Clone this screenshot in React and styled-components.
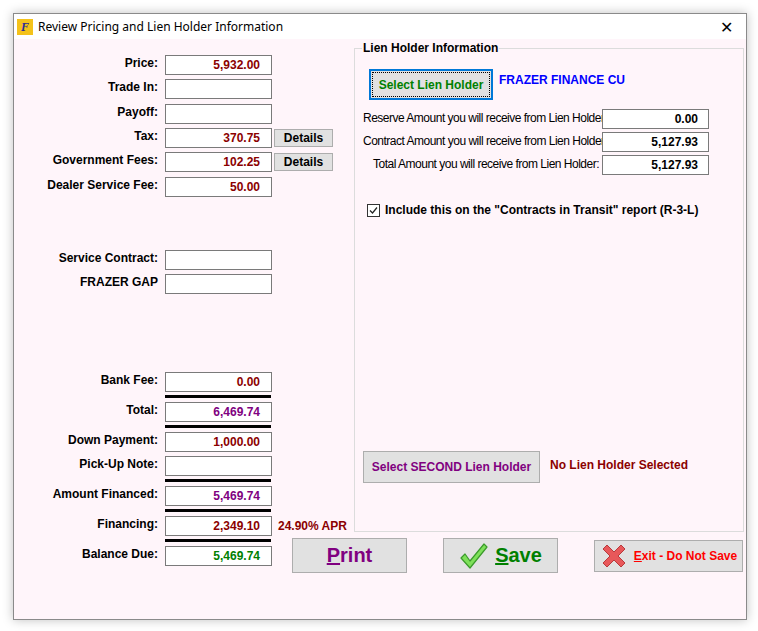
import React from 'react';
import styled, { createGlobalStyle } from 'styled-components';

const Global = createGlobalStyle`
  body { margin: 0; background: #ffffff; font-family: "Liberation Sans", Arial, sans-serif; }
`;

const Page = styled.div`
  width: 758px;
  height: 631px;
  padding: 13px;
  box-sizing: border-box;
`;

const Window = styled.div`
  width: 734px;
  height: 607px;
  border: 1px solid #8a8a8a;
  box-sizing: border-box;
  background: #fff5fa;
  box-shadow: 0 0 10px rgba(0, 0, 0, 0.25);
  display: flex;
  flex-direction: column;
`;

const TitleBar = styled.div`
  height: 25px;
  background: #fff;
  display: flex;
  align-items: center;
  padding-left: 3px;
  font-family: "Noto Sans", sans-serif;
  font-size: 12px;
  color: #000;
`;

const Logo = styled.div`
  width: 16px;
  height: 16px;
  background: #f4c21a;
  color: #2a2a9a;
  font-family: "Liberation Serif", serif;
  font-style: italic;
  font-weight: bold;
  font-size: 12px;
  line-height: 16px;
  text-align: center;
  margin-right: 5px;
`;

const Title = styled.span`
  flex: 1;
`;

const Close = styled.span`
  width: 40px;
  text-align: center;
  font-size: 16px;
`;

const Body = styled.div`
  flex: 1;
  display: flex;
`;

const Left = styled.div`
  width: 278px;
  padding-top: 16px;
  display: flex;
  flex-direction: column;
`;

const Row = styled.div`
  display: grid;
  grid-template-columns: 144px 107px auto;
  column-gap: 7px;
  align-items: center;
  margin-top: ${p => p.$mt || 0}px;
  height: 20px;
`;

const Label = styled.div`
  text-align: right;
  font-weight: bold;
  font-size: 12px;
  color: #000;
  white-space: nowrap;
  margin-top: -4px;
`;

const Field = styled.div`
  height: 20px;
  box-sizing: border-box;
  border: 1px solid #7a7a7a;
  background: #fff;
  text-align: right;
  padding-right: 11px;
  font-weight: bold;
  font-size: 12px;
  line-height: 18px;
  color: ${p => p.$color || '#8b0000'};
`;

const Details = styled.button`
  width: 59px;
  height: 18px;
  border: 1px solid #adadad;
  background: #e1e1e1;
  font-family: inherit;
  font-weight: bold;
  font-size: 12px;
  padding: 0;
  margin-left: -5px;
`;

const Apr = styled.span`
  color: #8b0000;
  font-weight: bold;
  font-size: 12px;
  white-space: nowrap;
  margin-left: -1px;
`;

const Rule = styled.div`
  width: 106px;
  height: 3px;
  background: #000;
  margin: 3px 0 4px 151px;
`;

const Right = styled.div`
  flex: 1;
  display: flex;
  flex-direction: column;
  padding-top: 2px;
`;

const Group = styled.fieldset`
  margin: 0 2px 0 62px;
  height: 491px;
  box-sizing: border-box;
  border: 1px solid #dcdcdc;
  padding: 14px 8px 0 8px;
  display: flex;
  flex-direction: column;
`;

const Legend = styled.legend`
  font-weight: bold;
  font-size: 12px;
  padding: 0 1px;
  margin-left: -1px;
`;

const LienLine = styled.div`
  display: flex;
  align-items: flex-start;
  gap: 6px;
`;

const SelectBtn = styled.button`
  width: 124px;
  height: 31px;
  background: #e1e1e1;
  border: 2px solid #0078d7;
  outline: 1px dotted #000;
  outline-offset: -4px;
  color: #008000;
  font-family: inherit;
  font-weight: bold;
  font-size: 12px;
  padding: 0;
  margin-left: 6px;
`;

const Blue = styled.span`
  color: #0000ff;
  font-weight: bold;
  font-size: 12px;
  margin-top: 4px;
`;

const AmountRows = styled.div`
  display: flex;
  flex-direction: column;
  gap: 3px;
  margin-top: 9px;
`;

const AmountRow = styled.div`
  display: grid;
  grid-template-columns: 236px 107px;
  column-gap: 3px;
  align-items: center;
`;

const NarrowLabel = styled.div`
  text-align: right;
  font-size: 12px;
  letter-spacing: -0.5px;
  color: #000;
  white-space: nowrap;
  margin-top: -3px;
`;

const AmountBox = styled(Field)`
  color: #000;
  padding-right: 10px;
`;

const Check = styled.label`
  display: flex;
  align-items: center;
  gap: 5px;
  margin: 28px 0 0 4px;
  font-weight: bold;
  font-size: 12px;
`;

const Box = styled.span`
  width: 11px;
  height: 11px;
  border: 1px solid #333;
  background: #fff;
  display: flex;
  align-items: center;
  justify-content: center;
`;

const Second = styled.div`
  display: flex;
  align-items: flex-start;
  gap: 10px;
  margin-top: 234px;
`;

const GrayBtn = styled.button`
  width: 177px;
  height: 32px;
  background: #e1e1e1;
  border: 1px solid #adadad;
  color: #800080;
  font-family: inherit;
  font-weight: bold;
  font-size: 12px;
  padding: 0;
`;

const Red = styled.span`
  color: #8b0000;
  font-weight: bold;
  font-size: 12px;
  margin-top: 7px;
`;

const Buttons = styled.div`
  display: flex;
  align-items: center;
  margin-top: 6px;
  gap: 36px;
`;

const BigBtn = styled.button`
  width: ${p => p.$w}px;
  height: ${p => p.$h}px;
  background: #e1e1e1;
  border: 1px solid #adadad;
  color: ${p => p.$color};
  font-family: inherit;
  font-weight: bold;
  font-size: ${p => p.$fs}px;
  white-space: nowrap;
  padding: 0;
  display: flex;
  align-items: center;
  justify-content: center;
  gap: 6px;
`;

const amounts = [
  ['Reserve Amount you will receive from Lien Holder:', '0.00'],
  ['Contract Amount you will receive from Lien Holder:', '5,127.93'],
  ['Total Amount you will receive from Lien Holder:', '5,127.93'],
];

export default function App() {
  return (
    <Page>
      <Global />
      <Window>
        <TitleBar>
          <Logo>F</Logo>
          <Title>Review Pricing and Lien Holder Information</Title>
          <Close>✕</Close>
        </TitleBar>
        <Body>
          <Left>
            <Row><Label>Price:</Label><Field>5,932.00</Field></Row>
            <Row $mt={4}><Label>Trade In:</Label><Field /></Row>
            <Row $mt={5}><Label>Payoff:</Label><Field /></Row>
            <Row $mt={4}><Label>Tax:</Label><Field>370.75</Field><Details>Details</Details></Row>
            <Row $mt={4}><Label>Government Fees:</Label><Field>102.25</Field><Details>Details</Details></Row>
            <Row $mt={5}><Label>Dealer Service Fee:</Label><Field>50.00</Field></Row>
            <Row $mt={53}><Label>Service Contract:</Label><Field /></Row>
            <Row $mt={4}><Label>FRAZER GAP</Label><Field /></Row>
            <Row $mt={78}><Label>Bank Fee:</Label><Field>0.00</Field></Row>
            <Rule />
            <Row><Label>Total:</Label><Field $color="#800080">6,469.74</Field></Row>
            <Rule />
            <Row><Label>Down Payment:</Label><Field>1,000.00</Field></Row>
            <Row $mt={4}><Label>Pick-Up Note:</Label><Field /></Row>
            <Rule />
            <Row><Label>Amount Financed:</Label><Field $color="#800080">5,469.74</Field></Row>
            <Rule />
            <Row><Label>Financing:</Label><Field>2,349.10</Field><Apr>24.90% APR</Apr></Row>
            <Rule />
            <Row><Label>Balance Due:</Label><Field $color="#008000">5,469.74</Field></Row>
          </Left>
          <Right>
            <Group>
              <Legend>Lien Holder Information</Legend>
              <LienLine>
                <SelectBtn>Select Lien Holder</SelectBtn>
                <Blue>FRAZER FINANCE CU</Blue>
              </LienLine>
              <AmountRows>
                {amounts.map(([l, v]) => (
                  <AmountRow key={l}>
                    <NarrowLabel>{l}</NarrowLabel>
                    <AmountBox>{v}</AmountBox>
                  </AmountRow>
                ))}
              </AmountRows>
              <Check>
                <Box>
                  <svg width="9" height="9" viewBox="0 0 9 9">
                    <path d="M1 4.5 L3.5 7 L8 1.5" fill="none" stroke="#222" strokeWidth="1.2" />
                  </svg>
                </Box>
                Include this on the "Contracts in Transit" report (R-3-L)
              </Check>
              <Second>
                <GrayBtn>Select SECOND Lien Holder</GrayBtn>
                <Red>No Lien Holder Selected</Red>
              </Second>
            </Group>
            <Buttons>
              <BigBtn $w={115} $h={35} $color="#800080" $fs={20}><span><u>P</u>rint</span></BigBtn>
              <BigBtn $w={115} $h={35} $color="#008000" $fs={20}>
                <svg width="30" height="28" viewBox="0 0 30 28">
                  <path d="M2 16 L6 12 L11 19 L25 2 L28 5 L11 26 Z" fill="#7ee05a" stroke="#3a9a2a" strokeWidth="1.2" strokeLinejoin="round" />
                </svg>
                <span><u>S</u>ave</span>
              </BigBtn>
              <BigBtn $w={149} $h={32} $color="#ff0000" $fs={12}>
                <svg width="28" height="28" viewBox="0 0 28 28">
                  <path d="M3 7 L7 3 L14 10 L21 3 L25 7 L18 14 L25 21 L21 25 L14 18 L7 25 L3 21 L10 14 Z" fill="#e8585a" stroke="#b83a3c" strokeWidth="1" strokeLinejoin="round" />
                </svg>
                <span><u>E</u>xit - Do Not Save</span>
              </BigBtn>
            </Buttons>
          </Right>
        </Body>
      </Window>
    </Page>
  );
}
